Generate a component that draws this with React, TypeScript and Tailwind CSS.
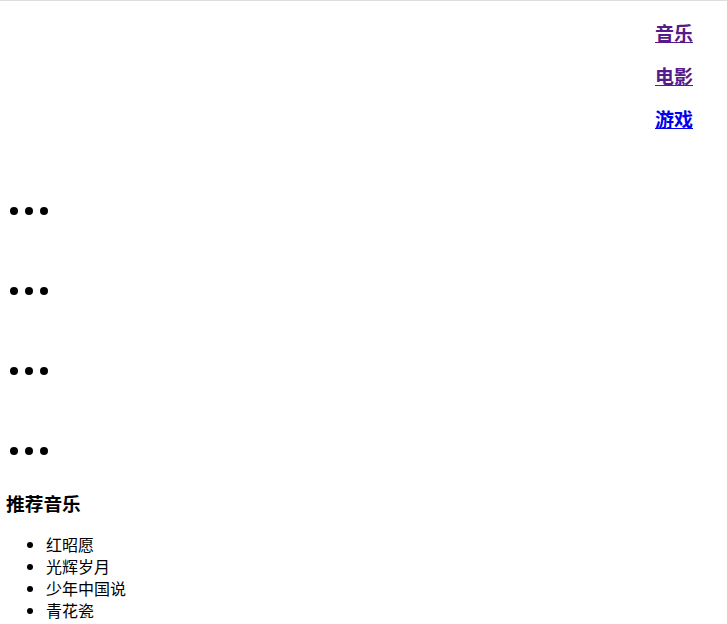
import React from 'react';

const links = [
  { label: '音乐', visited: true },
  { label: '电影', visited: true },
  { label: '游戏', visited: false },
];

const songs = ['红昭愿', '光辉岁月', '少年中国说', '青花瓷'];

const font = { fontFamily: '"Noto Sans CJK SC", "Liberation Sans", sans-serif' };

const Dots: React.FC = () => (
  <div className="h-[80px] flex items-center pl-[4px]">
    <div className="flex gap-[7px]">
      <span className="w-[8px] h-[8px] rounded-full bg-black" />
      <span className="w-[8px] h-[8px] rounded-full bg-black" />
      <span className="w-[8px] h-[8px] rounded-full bg-black" />
    </div>
  </div>
);

export default function App() {
  return (
    <div
      className="min-h-screen bg-white text-black border-t border-[#dddddd] px-[6px] font-['Noto_Sans_CJK_SC','Liberation_Sans',sans-serif]"
      style={font}
    >
      <nav className="flex flex-col items-end pt-[18px] pr-[28px] gap-[15px]">
        {links.map((l) => (
          <a
            key={l.label}
            href="#"
            className={`text-[19px] leading-[28px] font-bold underline ${
              l.visited ? 'text-[#551a8b]' : 'text-[#0000ee]'
            }`}
          >
            {l.label}
          </a>
        ))}
      </nav>

      <div className="mt-[38px]">
        <Dots />
        <Dots />
        <Dots />
        <Dots />
      </div>

      <h3 className="text-[18.72px] leading-[24px] font-bold">推荐音乐</h3>
      <ul className="mt-[18px] pl-[40px] list-disc text-[16px] leading-[22px]">
        {songs.map((s) => (
          <li key={s}>{s}</li>
        ))}
      </ul>
    </div>
  );
}
